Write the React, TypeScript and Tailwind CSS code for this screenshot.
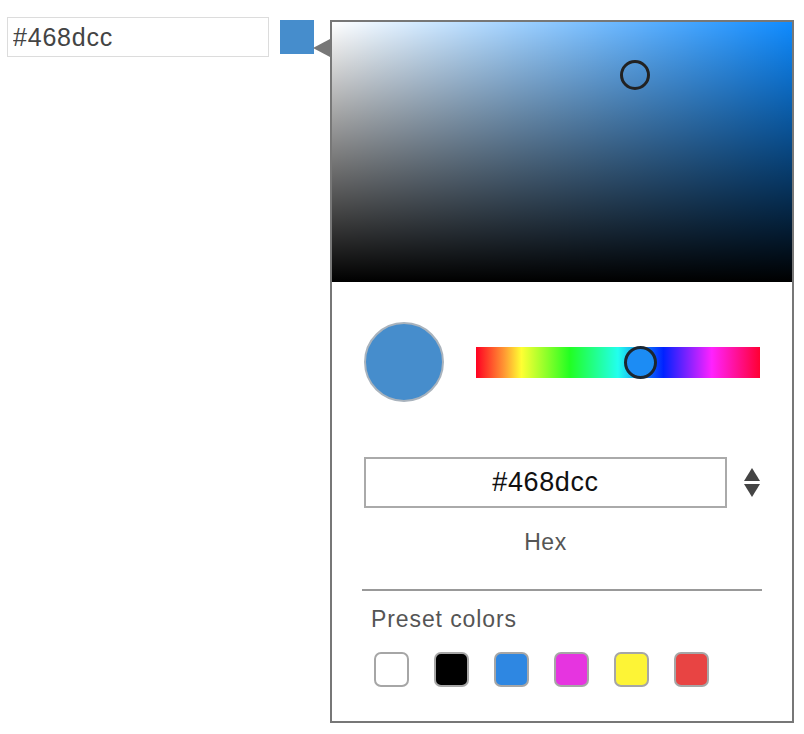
const presets = ["#ffffff", "#000000", "#2e87e2", "#e634e0", "#fdf436", "#e84443"];

const App = () => {
  return (
    <div className="flex items-start bg-white pl-[7px] pt-[17px] font-['Liberation_Sans',Arial,sans-serif]">
      <input
        value="#468dcc"
        readOnly
        className="h-[40px] w-[262px] border border-[#dcdcdc] px-[5px] text-[25px] tracking-[0.8px] text-[#444] outline-none"
      />
      <div className="ml-[11px] mt-[3px] h-[34px] w-[34px] bg-[#468dcc]" />

      <div className="relative ml-[16px] mt-[3px] w-[464px] border-2 border-[#777] bg-white">
        <div className="absolute left-[-19px] top-[17px] h-0 w-0 border-y-[9px] border-r-[17px] border-y-transparent border-r-[#777]" />

        <div className="relative h-[260px] bg-[#0f8bff]">
          <div className="absolute inset-0 bg-gradient-to-r from-white to-transparent" />
          <div className="absolute inset-0 bg-gradient-to-t from-black to-transparent" />
          <div className="absolute left-[288px] top-[38px] h-[30px] w-[30px] rounded-full border-[3px] border-[#222]" />
        </div>

        <div className="px-[32px] pb-[34px]">
          <div className="mt-[40px] flex items-center">
            <div className="h-[80px] w-[80px] rounded-full border-2 border-[#a9b3bd] bg-[#468dcc]" />
            <div className="relative ml-[32px] h-[31px] flex-1 bg-[linear-gradient(to_right,#ff0022,#ff9933_10%,#ffff33_16%,#22ff22_33%,#22ffee_50%,#0022ff_66%,#ff22ff_83%,#ff0033)]">
              <div className="absolute left-[148px] top-[-1px] h-[33px] w-[33px] rounded-full border-[3px] border-[#1c2630] bg-[#1c8cf4]" />
            </div>
          </div>

          <div className="mt-[55px] flex items-center">
            <div className="flex h-[51px] flex-1 items-center justify-center border-2 border-[#aaa] text-[27px] tracking-[0.6px] text-[#111]">
              #468dcc
            </div>
            <div className="ml-[17px] flex w-[16px] flex-col items-center gap-[3px]">
              <div className="h-0 w-0 border-x-[8px] border-b-[13px] border-x-transparent border-b-[#444]" />
              <div className="h-0 w-0 border-x-[8px] border-t-[13px] border-x-transparent border-t-[#444]" />
            </div>
          </div>

          <div className="mt-[21px] pr-[33px] text-center text-[23px] leading-[26px] tracking-[0.6px] text-[#555]">Hex</div>

          <div className="mx-[-2px] mt-[34px] h-[2px] bg-[#999]" />

          <div className="mt-[15px] pl-[7px] text-[23px] leading-[26px] tracking-[0.9px] text-[#555]">Preset colors</div>

          <div className="mt-[20px] flex gap-[25px] pl-[10px]">
            {presets.map((c) => (
              <div
                key={c}
                className="h-[35px] w-[35px] rounded-[7px] border-2 border-[#a6a6a6]"
                style={{ backgroundColor: c }}
              />
            ))}
          </div>
        </div>
      </div>
    </div>
  );
};

export default App;
